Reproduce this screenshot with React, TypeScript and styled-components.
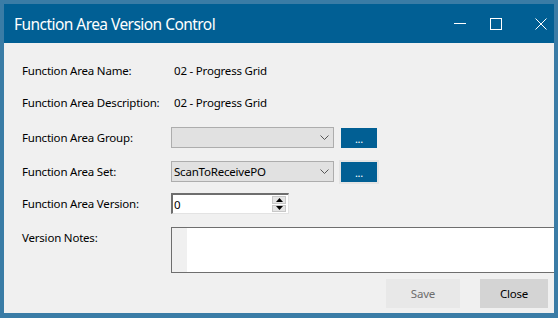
import React from 'react'
import styled, { createGlobalStyle } from 'styled-components'

const Global = createGlobalStyle`
  html, body {
    margin: 0;
    padding: 0;
    background: #3a7ca6;
    overflow: hidden;
  }
  body {
    font-family: "Segoe UI", "Noto Sans", "Liberation Sans", sans-serif;
  }
`

const Frame = styled.div`
  width: 558px;
  height: 318px;
  padding: 4px 4px 5px 4px;
  box-sizing: border-box;
`

const Window = styled.div`
  width: 550px;
  height: 309px;
  display: flex;
  flex-direction: column;
  background: #f0f0f0;
  overflow: hidden;
`

const TitleBar = styled.div`
  height: 39px;
  flex: none;
  background: #015f94;
  display: flex;
  align-items: center;
  padding: 0 7px 0 10px;
  color: #ffffff;
`

const Title = styled.div`
  flex: 1;
  font-size: 15.5px;
  letter-spacing: -0.55px;
`

const WinButton = styled.div<{ gap: number }>`
  width: 12px;
  height: 12px;
  margin-left: ${p => p.gap}px;
  display: flex;
`

const Body = styled.div`
  flex: 1;
  display: grid;
  grid-template-columns: 149px minmax(0, 1fr);
  grid-template-rows: 32px 32px 39px 29px 35px 58px 1fr;
  padding: 11px 0 0 18px;
  font-size: 11.5px;
  letter-spacing: -0.2px;
  color: #000;
`

const Label = styled.div<{ top?: boolean }>`
  display: flex;
  align-items: ${p => (p.top ? 'flex-start' : 'center')};
  padding-top: ${p => (p.top ? '9px' : '0')};
  white-space: nowrap;
`

const Cell = styled.div<{ top?: boolean }>`
  display: flex;
  align-items: ${p => (p.top ? 'flex-start' : 'center')};
  gap: 7px;
  padding-top: ${p => (p.top ? '6px' : '0')};
  min-width: 0;
`

const Value = styled.span`
  padding-left: 3px;
`

const Combo = styled.div`
  width: 163px;
  height: 21px;
  box-sizing: border-box;
  background: #e1e1e1;
  border: 1px solid #adadad;
  display: flex;
  align-items: center;
  padding: 0 4px 0 2px;
`

const ComboText = styled.span`
  flex: 1;
`

const DotsButton = styled.div<{ focused?: boolean }>`
  width: 36px;
  height: 20px;
  box-sizing: border-box;
  background: #015f94;
  color: #fff;
  font-size: 11px;
  line-height: 22px;
  text-align: center;
  outline: ${p => (p.focused ? '2px solid #e4e4e4' : 'none')};
  margin-top: ${p => (p.focused ? '1px' : '0')};
`

const NumBox = styled.div`
  width: 118px;
  height: 21px;
  box-sizing: border-box;
  background: #fff;
  border-top: 2px solid #6e6e6e;
  border-left: 2px solid #6e6e6e;
  border-right: 1px solid #e3e3e3;
  border-bottom: 1px solid #e3e3e3;
  display: flex;
  align-items: center;
  padding-right: 2px;
`

const NumText = styled.span`
  flex: 1;
  padding-left: 1px;
`

const Spin = styled.div`
  width: 14px;
  height: 16px;
  display: flex;
  flex-direction: column;
  gap: 1px;
`

const SpinPart = styled.div`
  flex: 1;
  background: #e5e5e5;
  border: 1px solid #c8c8c8;
  display: flex;
  align-items: center;
  justify-content: center;
`

const Notes = styled.div`
  flex: none;
  width: 390px;
  height: 46px;
  box-sizing: border-box;
  border-top: 1px solid #6e6e6e;
  border-left: 1px solid #6e6e6e;
  border-bottom: 1px solid #6e6e6e;
  display: flex;
`

const Gutter = styled.div`
  width: 15px;
  background: #f0f0f0;
`

const NotesArea = styled.div`
  flex: 1;
  background: #fff;
`

const Footer = styled.div`
  grid-column: 1 / 3;
  display: flex;
  justify-content: flex-end;
  gap: 20px;
  padding: 0 6px 0 0;
`

const Button = styled.div<{ disabled?: boolean }>`
  width: ${p => (p.disabled ? '74px' : '68px')};
  height: 29px;
  display: flex;
  align-items: center;
  justify-content: center;
  background: ${p => (p.disabled ? '#e8e8e8' : '#d4d4d4')};
  color: ${p => (p.disabled ? '#6d6d6d' : '#000')};
`

const Chevron = () => (
  <svg width="9" height="5" viewBox="0 0 9 5">
    <path d="M0.5 0.5 L4.5 4.5 L8.5 0.5" fill="none" stroke="#555" strokeWidth="1" />
  </svg>
)

export default function App() {
  return (
    <>
      <Global />
      <Frame>
        <Window>
          <TitleBar>
            <Title>Function Area Version Control</Title>
            <WinButton gap={0}>
              <svg width="12" height="12" viewBox="0 0 12 12">
                <path d="M0 5.5 H12" stroke="#fff" strokeWidth="1" />
              </svg>
            </WinButton>
            <WinButton gap={24}>
              <svg width="12" height="12" viewBox="0 0 12 12">
                <rect x="0.5" y="0.5" width="11" height="11" fill="none" stroke="#fff" strokeWidth="1" />
              </svg>
            </WinButton>
            <WinButton gap={33}>
              <svg width="12" height="12" viewBox="0 0 12 12">
                <path d="M0.5 0.5 L11.5 11.5 M11.5 0.5 L0.5 11.5" stroke="#fff" strokeWidth="1" />
              </svg>
            </WinButton>
          </TitleBar>
          <Body>
            <Label>Function Area Name:</Label>
            <Cell><Value>02 - Progress Grid</Value></Cell>

            <Label>Function Area Description:</Label>
            <Cell><Value>02 - Progress Grid</Value></Cell>

            <Label>Function Area Group:</Label>
            <Cell>
              <Combo><ComboText /><Chevron /></Combo>
              <DotsButton>...</DotsButton>
            </Cell>

            <Label>Function Area Set:</Label>
            <Cell>
              <Combo><ComboText>ScanToReceivePO</ComboText><Chevron /></Combo>
              <DotsButton focused>...</DotsButton>
            </Cell>

            <Label>Function Area Version:</Label>
            <Cell>
              <NumBox>
                <NumText>0</NumText>
                <Spin>
                  <SpinPart>
                    <svg width="7" height="4" viewBox="0 0 7 4"><path d="M0 4 L3.5 0 L7 4 Z" fill="#000" /></svg>
                  </SpinPart>
                  <SpinPart>
                    <svg width="7" height="4" viewBox="0 0 7 4"><path d="M0 0 L3.5 4 L7 0 Z" fill="#000" /></svg>
                  </SpinPart>
                </Spin>
              </NumBox>
            </Cell>

            <Label top>Version Notes:</Label>
            <Cell top>
              <Notes><Gutter /><NotesArea /></Notes>
            </Cell>

            <Footer>
              <Button disabled>Save</Button>
              <Button>Close</Button>
            </Footer>
          </Body>
        </Window>
      </Frame>
    </>
  )
}
